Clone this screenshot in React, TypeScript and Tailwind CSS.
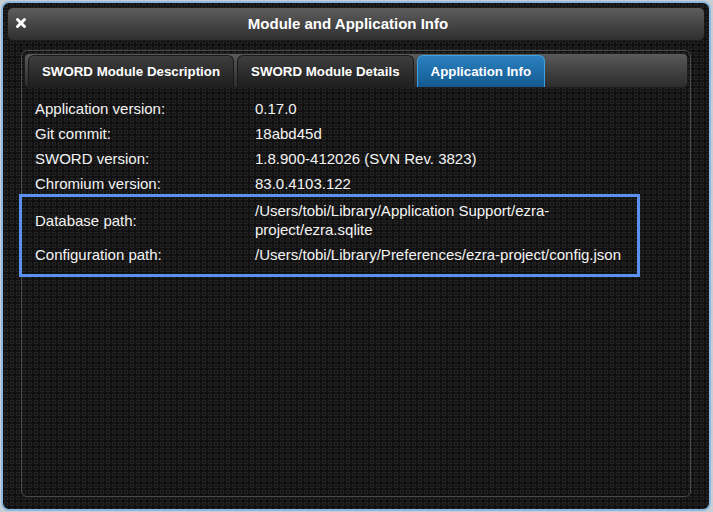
import { X } from "lucide-react";

const pattern =
  "bg-[#0f0f0f] bg-[radial-gradient(circle_at_center,transparent_1.4px,#262626_1.6px,#262626_2.4px,transparent_2.6px)] bg-[length:6px_6px]";

const rows: [string, string][] = [
  ["Application version:", "0.17.0"],
  ["Git commit:", "18abd45d"],
  ["SWORD version:", "1.8.900-412026 (SVN Rev. 3823)"],
  ["Chromium version:", "83.0.4103.122"],
];

const highlighted: [string, string][] = [
  ["Database path:", "/Users/tobi/Library/Application Support/ezra-project/ezra.sqlite"],
  ["Configuration path:", "/Users/tobi/Library/Preferences/ezra-project/config.json"],
];

function InfoRow({ label, value }: { label: string; value: string }) {
  return (
    <div className="flex py-[3px] leading-[19px]">
      <div className="w-[220px] shrink-0 flex items-center">{label}</div>
      <div className="w-[380px]">{value}</div>
    </div>
  );
}

function Tab({ label, active }: { label: string; active?: boolean }) {
  return (
    <div
      className={
        active
          ? "h-[32px] px-[13px] flex items-center rounded-t-[6px] border border-b-0 border-[#3d9ee0] bg-gradient-to-b from-[#2a80c0] to-[#145a90] text-white"
          : "h-[32px] px-[13px] flex items-center rounded-t-[6px] border border-b-0 border-[#1a1a1a] bg-gradient-to-b from-[#3e3e3e] to-[#1f1f1f] text-white"
      }
    >
      {label}
    </div>
  );
}

export default function App() {
  return (
    <div className="w-[713px] h-[512px] bg-[#c9ced4] pt-[1px] pl-[1px] font-['Liberation_Sans',Arial,sans-serif]">
      <div className={`w-[710px] h-[510px] rounded-[8px] border-2 border-[#8cb7de] p-[4px] flex flex-col ${pattern}`}>
        {/* Title bar */}
        <div className="relative h-[34px] shrink-0 rounded-[6px] border border-[#1c1c1c] bg-gradient-to-b from-[#5e5e5e] to-[#2f2f2f] flex items-center justify-center pr-[16px]">
          <X className="absolute left-[6px] top-[8px] w-[14px] h-[14px] text-white" strokeWidth={5} />
          <span className="text-white font-bold text-[15px]">Module and Application Info</span>
        </div>

        {/* Tab panel */}
        <div className="mt-[9px] mx-[14px] mb-[8px] flex-1 rounded-[6px] border border-[#4a4a4a] flex flex-col">
          <div className="mx-[2px] mt-[2px] h-[35px] rounded-[5px] border border-[#1e1e1e] bg-gradient-to-b from-[#5a5a5a] to-[#2c2c2c] flex items-end gap-[3px] pl-[3px] text-[13.3px] font-bold">
            <Tab label="SWORD Module Description" />
            <Tab label="SWORD Module Details" />
            <Tab label="Application Info" active />
          </div>

          <div className="pt-[8px] pl-[13px] text-[15px] text-[#f4f4f4]">
            {rows.map(([l, v]) => (
              <InfoRow key={l} label={l} value={v} />
            ))}
            <div className="w-[621px] -ml-[16px] -mt-[2px] pl-[13px] pt-[1px] pb-[7px] border-[3px] border-[#5b8ff0]">
              {highlighted.map(([l, v]) => (
                <InfoRow key={l} label={l} value={v} />
              ))}
            </div>
          </div>
        </div>
      </div>
    </div>
  );
}
